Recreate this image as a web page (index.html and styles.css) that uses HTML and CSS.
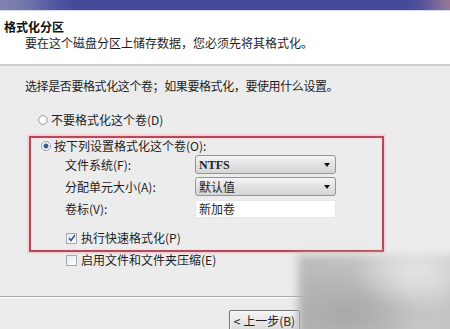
FILE: index.html
```html
<!DOCTYPE html>
<html lang="zh-CN">
<head>
  <meta charset="UTF-8">
  <title>格式化分区</title>
  <link rel="stylesheet" href="styles.css">
</head>
<body>
  <div class="titlebar"></div>

  <div class="header">
    <div class="h-title">格式化分区</div>
    <div class="h-sub">要在这个磁盘分区上储存数据，您必须先将其格式化。</div>
  </div>

  <div class="main">
    <p class="prompt">选择是否要格式化这个卷；如果要格式化，要使用什么设置。</p>

    <div class="opt first"><span class="radio"></span>不要格式化这个卷(D)</div>

    <div class="redbox">
      <div class="opt"><span class="radio on"></span>按下列设置格式化这个卷(O):</div>

      <div class="fields">
        <span class="lbl">文件系统(F):</span>
        <div class="select"><span>NTFS</span><i class="arrow"></i></div>

        <span class="lbl">分配单元大小(A):</span>
        <div class="select"><span class="cjk">默认值</span><i class="arrow"></i></div>

        <span class="lbl">卷标(V):</span>
        <div class="textbox">新加卷</div>
      </div>

      <div class="chk top">
        <span class="box">
          <svg width="8" height="8" viewBox="0 0 8 8"><path d="M1 4 L3 6.5 L7 1" fill="none" stroke="#2a4a8a" stroke-width="1.4"/></svg>
        </span>执行快速格式化(P)
      </div>
    </div>

    <div class="chk"><span class="box"></span>启用文件和文件夹压缩(E)</div>
  </div>

  <div class="footer">
    <button class="btn">&lt; 上一步(B)</button>
  </div>

  <!-- tache floue en bas à droite -->
  <div class="smudge"></div>
</body>
</html>
```

FILE: styles.css
```css
html {
  background: #ececec;
}

body {
  margin: 0;
  width: 450px;
  height: 329px;
  overflow: hidden;
  font-family: "Noto Sans CJK SC", "Noto Sans", sans-serif;
  font-size: 12px;
  line-height: 14px;
  color: #1e1e1e;
  position: relative;
}

.titlebar {
  height: 10px;
  background: #1c2c96;
  box-shadow: inset 60px 0 40px -20px #8084b0, inset -30px 0 30px -15px #b08090;
  border-bottom: 1px solid #d6dcf4;
}

.header {
  height: 55px;
  background: #fff;
  border-bottom: 2px solid #cfcfcf;
  box-sizing: border-box;
  padding-top: 8px;
}

.h-title {
  padding-left: 4px;
  font-weight: bold;
  line-height: 15px;
  color: #111;
}

.h-sub {
  margin-top: 2px;
  padding-left: 25px;
}

.main {
  height: 231px;
  box-sizing: border-box;
  border-bottom: 1px solid #a8a8a8;
  padding-top: 13px;
}

.prompt {
  margin: 0;
  padding-left: 25px;
  letter-spacing: -0.4px;
}

.opt {
  display: flex;
  align-items: center;
}

.opt.first {
  margin-top: 20px;
  padding-left: 38px;
}

.radio {
  width: 8px;
  height: 8px;
  border: 1px solid #9aa4b0;
  border-radius: 50%;
  background: radial-gradient(circle, #ffffff 30%, #dde2e8 100%);
  margin-right: 3px;
  flex-shrink: 0;
}

.radio.on {
  background: radial-gradient(circle, #3a5a90 0 2px, #ffffff 3px, #dde2e8 100%);
}

.redbox {
  margin: 9px 0 0 29px;
  width: 355px;
  box-sizing: border-box;
  border: 2px solid #b24a5a;
  box-shadow: 0 0 0 2px #f6d2d6, inset 0 0 0 1px #f7dfe2;
  padding: 1px 0 5px 10px;
}

.fields {
  display: grid;
  grid-template-columns: 130px 141px;
  row-gap: 3px;
  margin: 2px 0 0 24px;
  align-items: center;
}

.lbl {
  line-height: 19px;
}

.select {
  height: 19px;
  box-sizing: border-box;
  border: 1px solid #8a96a2;
  border-radius: 3px;
  background: linear-gradient(#f6f6f6, #e2e2e2 50%, #d6d6d6);
  display: flex;
  align-items: center;
  justify-content: space-between;
  padding: 0 5px 0 3px;
}

.select span {
  font-family: "Liberation Serif", "Noto Sans CJK SC", serif;
  font-weight: bold;
}

.select span.cjk {
  font-family: "Noto Sans CJK SC", sans-serif;
  font-weight: normal;
}

.arrow {
  width: 0;
  height: 0;
  border-left: 3px solid transparent;
  border-right: 3px solid transparent;
  border-top: 4px solid #111;
}

.textbox {
  height: 18px;
  box-sizing: border-box;
  background: #fff;
  border: 1px solid #e6e6e6;
  padding-left: 3px;
  line-height: 16px;
}

.chk {
  display: flex;
  align-items: center;
  padding-left: 66px;
  margin-top: 1px;
}

.chk.top {
  margin-top: 13px;
  padding-left: 25px;
}

.box {
  width: 9px;
  height: 9px;
  border: 1px solid #a0a8b4;
  background: linear-gradient(135deg, #e4e8ee, #ffffff);
  margin-right: 4px;
  display: flex;
  align-items: center;
  justify-content: center;
  flex-shrink: 0;
}

.footer {
  border-top: 1px solid #fff;
  padding: 12px 0 0 229px;
}

.btn {
  width: 71px;
  height: 21px;
  padding: 0;
  font-family: inherit;
  font-size: 12px;
  color: #222;
  background: linear-gradient(#f4f4f4, #dcdcdc);
  border: 1px solid #707070;
  border-radius: 2px;
  box-shadow: inset 0 0 0 1px #fbfbfb;
}

.smudge {
  position: absolute;
  right: -10px;
  bottom: -10px;
  width: 162px;
  height: 84px;
  background:
    radial-gradient(ellipse at 75% 20%, #e4e4e4 0%, rgba(228, 228, 228, 0) 40%),
    radial-gradient(ellipse at 30% 70%, #a8a8a8 0%, rgba(168, 168, 168, 0) 60%),
    linear-gradient(90deg, #bababa, #c2c2c2 40%, #d0d0d0 70%, #c0c0c0);
  filter: blur(4px);
}
```
